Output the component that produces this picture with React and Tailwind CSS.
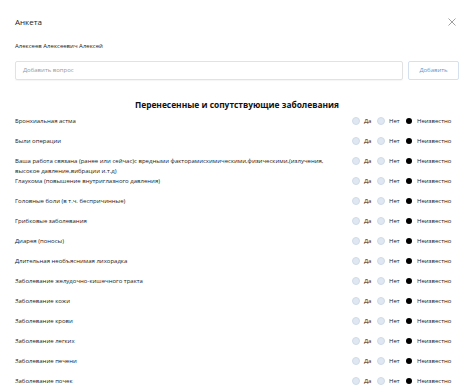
const rows = [
  'Бронхиальная астма',
  'Были операции',
  'Ваша работа связана (ранее или сейчас)с вредными факторамисхимическими,физическими,(излучения, высокое давление,вибрации и.т.д)',
  'Глаукома (повышение внутриглазного давления)',
  'Головные боли (в т.ч. беспричинные)',
  'Грибковые заболевания',
  'Диарея (поносы)',
  'Длительная необъяснимая лихорадка',
  'Заболевание желудочно-кишечного тракта',
  'Заболевание кожи',
  'Заболевание крови',
  'Заболевание легких',
  'Заболевание печени',
  'Заболевание почек',
];

const Radio = ({ checked }) =>
  checked ? (
    <span className="w-[6px] h-[6px] rounded-full bg-black shrink-0" />
  ) : (
    <span className="w-[8px] h-[8px] rounded-full bg-[#dfe8f2] border border-[#cfdbe8] shrink-0" />
  );

export default function App() {
  return (
    <div className="w-[474px] h-[388px] overflow-hidden bg-white text-[#1a1a1a] font-['Open_Sans',sans-serif]">
      <div className="px-[15px] pt-[15px]">
        {/* Header */}
        <div className="flex items-center justify-between h-[14px]">
          <h1 className="text-[8px] leading-[14px]">Анкета</h1>
          <svg width="8" height="8" viewBox="0 0 8 8" className="mr-[3px]">
            <path d="M0.5 0.5 L7.5 7.5 M7.5 0.5 L0.5 7.5" stroke="#888" strokeWidth="0.8" />
          </svg>
        </div>

        <p className="mt-[12px] text-[6px] leading-[10px]">Алексеев Алексеевич Алексей</p>

        {/* Add question */}
        <div className="mt-[10px] flex gap-[5px] h-[19px]">
          <div className="flex-1 flex items-center px-[7px] border border-[#e2e2e2] rounded-[2px] shadow-[0_1px_1px_rgba(0,0,0,0.04)]">
            <span className="text-[6px] text-[#9a9a9a]">Добавить вопрос</span>
          </div>
          <button className="w-[51px] flex items-center justify-center border border-[#d5e1ee] rounded-[2px] text-[6px] text-[#5b9bd1]">
            Добавить
          </button>
        </div>

        <h2 className="mt-[18px] text-center text-[8.4px] leading-[14px] font-bold text-[#111]">
          Перенесенные и сопутствующие заболевания
        </h2>

        {/* Rows */}
        <div className="mt-[4px] flex flex-col">
          {rows.map((r) => (
            <div key={r} className="flex items-start min-h-[20px]">
              <p className="flex-1 pr-[20px] text-[6px] leading-[10px]">{r}</p>
              <div className="w-[107px] flex items-center h-[10px] text-[6px] shrink-0">
                <div className="w-[25px] flex items-center gap-[4px]">
                  <Radio />
                  <span>Да</span>
                </div>
                <div className="w-[28px] flex items-center gap-[4px]">
                  <Radio />
                  <span>Нет</span>
                </div>
                <div className="flex items-center gap-[5px] pl-[1px]">
                  <Radio checked />
                  <span>Неизвестно</span>
                </div>
              </div>
            </div>
          ))}
        </div>
      </div>
    </div>
  );
}
